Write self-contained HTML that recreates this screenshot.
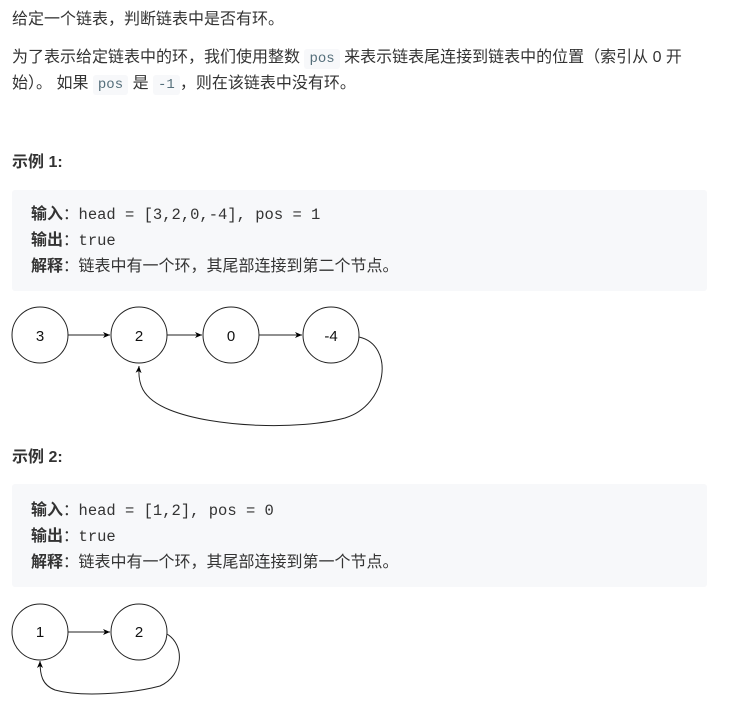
<!DOCTYPE html>
<html><head><meta charset="utf-8"><style>
body{margin:0;background:#fff;width:729px;height:704px;position:relative;overflow:hidden;font-family:"Liberation Sans","Noto Sans CJK SC",sans-serif;color:#333;font-size:16px}
.t{position:absolute;left:12px;white-space:nowrap;line-height:20px}
code{font-family:"Liberation Mono","Noto Sans CJK SC",monospace;background:#f7f8fa;color:#546e7a;padding:2px 5px;border-radius:3px;font-size:14px}
.blk{position:absolute;left:12px;width:695px;background:#f7f8fa;border-radius:3px}
.blk div{position:absolute;left:19px;white-space:nowrap;font-family:"Liberation Mono","Noto Sans CJK SC",monospace;font-size:15.5px;color:#333;line-height:20px}
b{font-family:"Liberation Sans","Noto Sans CJK SC",sans-serif;font-weight:bold;font-size:16px}
.cj{font-family:"Liberation Sans","Noto Sans CJK SC",sans-serif;font-size:16px}
svg{position:absolute;left:0;top:0}
</style></head><body>
<div class="t" style="top:10px">给定一个链表，判断链表中是否有环。</div>
<div class="t" style="top:48px">为了表示给定链表中的环，我们使用整数 <code>pos</code> 来表示链表尾连接到链表中的位置（索引从 0 开</div>
<div class="t" style="top:74px">始）。 如果 <code>pos</code> 是 <code>-1</code>，则在该链表中没有环。</div>
<div class="t" style="top:153px;font-weight:bold">示例 1:</div>
<div class="blk" style="top:190px;height:101px">
<div style="top:15px"><b>输入</b>：head = [3,2,0,-4], pos = 1</div>
<div style="top:41px"><b>输出</b>：true</div>
<div style="top:67px"><b>解释</b>：<span class="cj">链表中有一个环，其尾部连接到第二个节点。</span></div>
</div>
<div class="t" style="top:448px;font-weight:bold">示例 2:</div>
<div class="blk" style="top:484px;height:103px">
<div style="top:17px"><b>输入</b>：head = [1,2], pos = 0</div>
<div style="top:43px"><b>输出</b>：true</div>
<div style="top:69px"><b>解释</b>：<span class="cj">链表中有一个环，其尾部连接到第一个节点。</span></div>
</div>
<svg width="729" height="704" font-family="Liberation Sans" font-size="15" text-anchor="middle" fill="none" stroke="#222">
<defs><marker id="a" markerWidth="8" markerHeight="8" refX="7" refY="4" orient="auto" markerUnits="userSpaceOnUse"><path d="M0,1 L7,4 L0,7 L2,4z" fill="#000" stroke="none"/></marker></defs>
<g stroke-width="1">
<circle cx="40" cy="335" r="28"/><circle cx="139" cy="335" r="28"/><circle cx="231" cy="335" r="28"/><circle cx="331" cy="335" r="28"/>
<path d="M68,335H110" marker-end="url(#a)"/><path d="M167,335H202" marker-end="url(#a)"/><path d="M259,335H302" marker-end="url(#a)"/>
<path d="M359,337C395,345 388,405 345,418C300,430 215,428 170,410C140,398 138,382 139,366" marker-end="url(#a)"/>
<circle cx="40" cy="632" r="28"/><circle cx="139" cy="632" r="28"/>
<path d="M68,632H110" marker-end="url(#a)"/>
<path d="M167,634C185,645 184,675 160,686C130,694 80,697 55,690C42,685 40,675 40,661" marker-end="url(#a)"/>
</g>
<g fill="#111" stroke="none">
<text x="40" y="341">3</text><text x="139" y="341">2</text><text x="231" y="341">0</text><text x="331" y="341">-4</text>
<text x="40" y="637">1</text><text x="139" y="637">2</text>
</g>
</svg>
</body></html>
